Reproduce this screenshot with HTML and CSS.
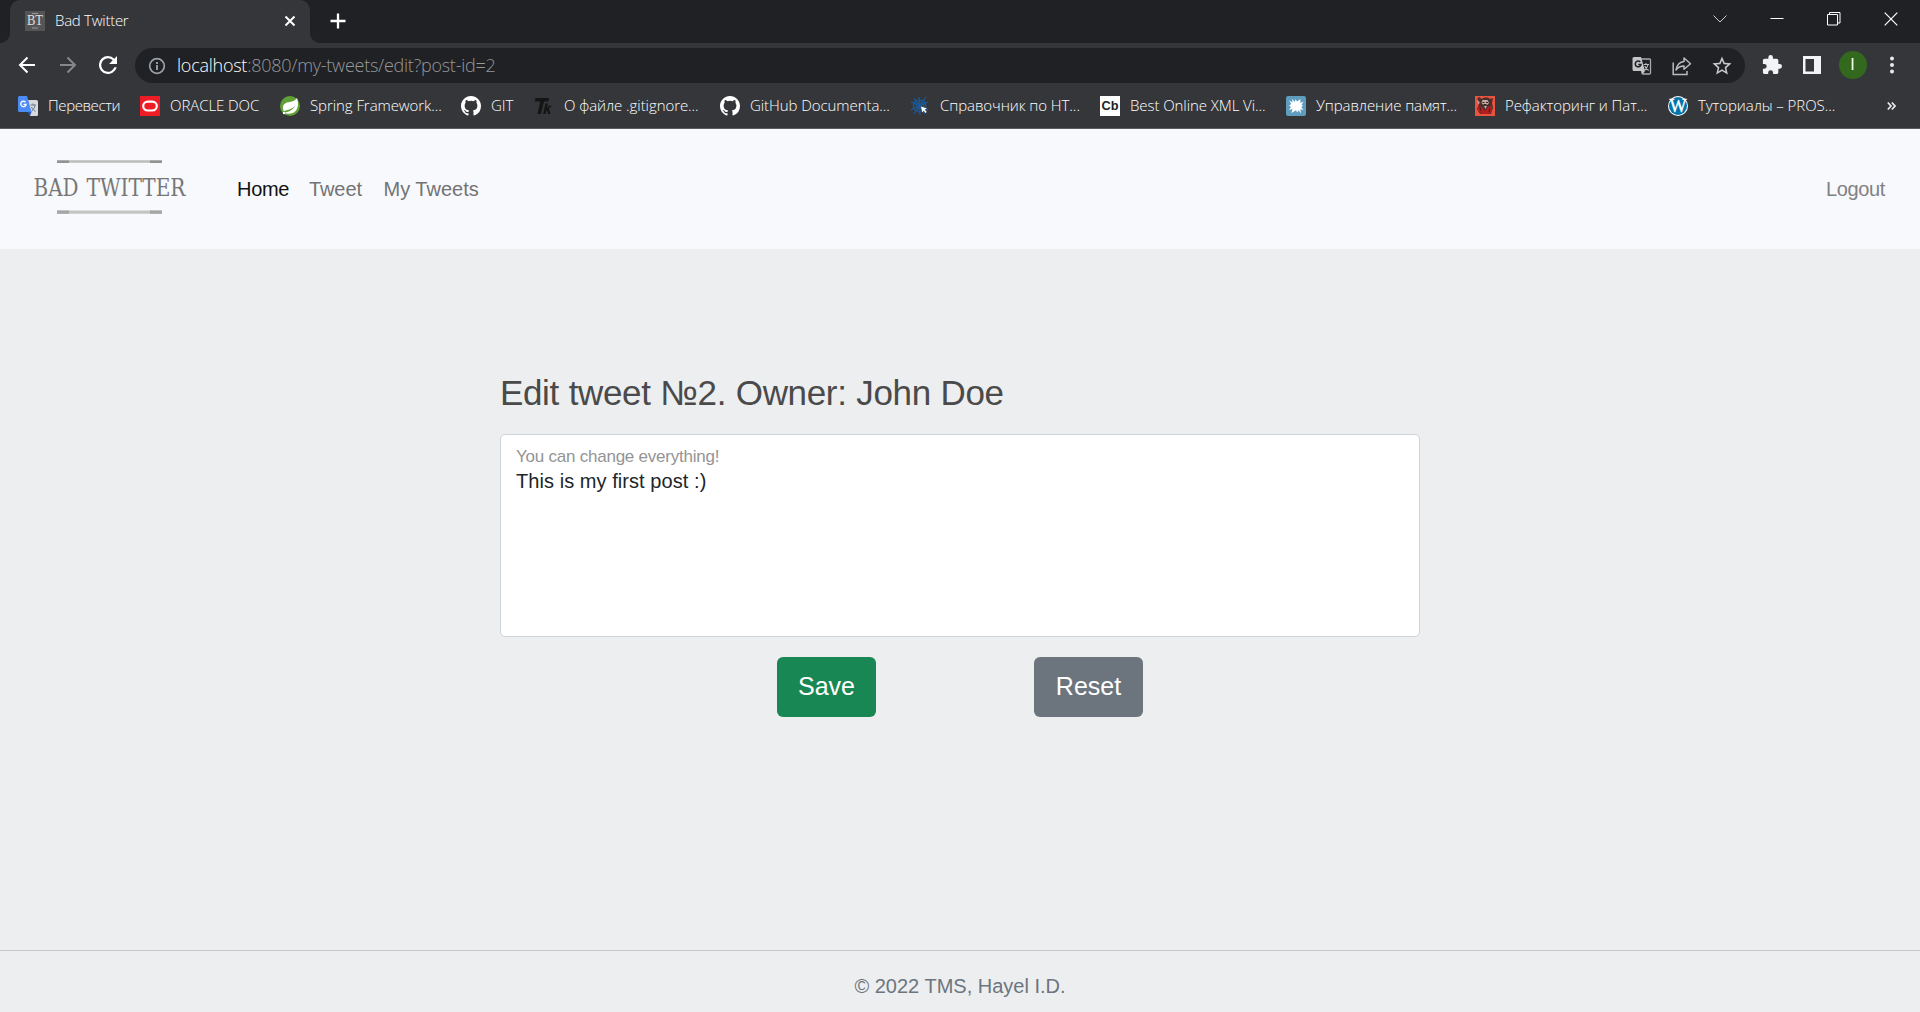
FILE: index.html
```html
<!DOCTYPE html>
<html lang="en">
<head>
<meta charset="utf-8">
<title>Bad Twitter</title>
<link rel="stylesheet" href="styles.css">
</head>
<body>
<div class="browser">
  <div class="tabstrip">
    <div class="tab">
      <svg class="favicon" width="20" height="20" viewBox="0 0 20 20"><rect width="20" height="20" fill="#555"/><path d="M7 2.500h6M7 17h6" stroke="#999"/><text x="2" y="14.300" textLength="16" lengthAdjust="spacingAndGlyphs" class="bt">BT</text></svg>
      <span class="tab-title">Bad Twitter</span>
      <svg class="tab-close" width="12" height="12" viewBox="0 0 12 12"><path d="M1.500 1.500l9 9m0-9l-9 9" stroke="#fff" stroke-width="2"/></svg>
    </div>
    <svg class="new-tab" width="16" height="16" viewBox="0 0 16 16"><path d="M8 .5v15M.5 8h15" stroke="#fff" stroke-width="2.300"/></svg>
    <div class="window-controls">
      <svg width="14" height="14" viewBox="0 0 14 14"><path d="M.5 3.500L7 10l6.500-6.500" fill="none" stroke="#ccc"/></svg>
      <svg width="14" height="14" viewBox="0 0 14 14"><path d="M.5 6.500h13" stroke="#fff"/></svg>
      <svg width="14" height="14" viewBox="0 0 14 14"><path d="M.5 2.500h10v10.500H.5zM2.500 2.500v-2h10.500v10.500h-2.500" fill="none" stroke="#fff"/></svg>
      <svg width="14" height="14" viewBox="0 0 14 14"><path d="M.7.7l12.600 12.600m0-12.600L.7 13.300" stroke="#fff" stroke-width="1.200"/></svg>
    </div>
  </div>
  <div class="toolbar">
    <svg class="back" width="18" height="18" viewBox="0 0 18 18"><path d="M17 9H2m7.500-7.500L2 9l7.500 7.500" fill="none" stroke="#fff" stroke-width="2"/></svg>
    <svg class="forward" width="18" height="18" viewBox="0 0 18 18"><path d="M1 9h15M8.500 1.500L16 9l-7.500 7.500" fill="none" stroke="#86878a" stroke-width="2"/></svg>
    <svg class="reload" width="18" height="18" viewBox="4 4 16 16"><path fill="#fff" d="M17.650 6.350A7.960 7.960 0 0 0 12 4a8 8 0 1 0 7.730 10h-2.080A6 6 0 1 1 12 6c1.660 0 3.140.69 4.220 1.780L13 11h7V4z"/></svg>
    <div class="omnibox">
      <svg class="info" width="18" height="18" viewBox="0 0 18 18"><circle cx="9" cy="9" r="7.300" fill="none" stroke="#9aa0a6" stroke-width="1.700"/><path d="M9 8v5M9 5v1.900" stroke="#9aa0a6" stroke-width="1.900"/></svg>
      <span class="url"><span class="host">localhost</span>:8080/my-tweets/edit?post-id=2</span>
      <div class="omni-actions">
        <svg width="20" height="20" viewBox="0 0 20 20"><path d="M8 3h9.500a1 1 0 0 1 1 1v13a1 1 0 0 1-1 1H11" fill="none" stroke="#aaa" stroke-width="1.300"/><path d="M2 1h7l4 14H2a1.500 1.500 0 0 1-1.500-1.500v-11A1.500 1.500 0 0 1 2 1z" fill="#c4c5c7"/><path d="M9 15h4l-3 4z" fill="#c4c5c7"/><path d="M8.300 6A2.900 2.900 0 1 0 9 8.500H6.300" fill="none" stroke="#202124" stroke-width="1.500"/><path d="M11.500 8.500H17M14 7v1.500M16 8.500c-.5 3-2 4.500-3.500 6M12.700 10c.8 2 2 3.400 4 4.500" fill="none" stroke="#bbb" stroke-width="1.100"/></svg>
        <svg width="20" height="20" viewBox="0 0 20 20"><path d="M1.200 6.500v12H15v-3.500" fill="none" stroke="#bbb" stroke-width="1.500"/><path d="M12 2l6.500 5.700-6.500 5.500V10c-3.500 0-6 1.300-8 4 .8-4.500 3.500-8 8-8.500z" fill="none" stroke="#bbb" stroke-width="1.500" stroke-linejoin="round"/></svg>
        <svg width="20" height="20" viewBox="1.500 1.500 21 21"><path fill="#c8c9cb" d="M22 9.240l-7.190-.62L12 2 9.190 8.630 2 9.240l5.460 4.730L5.820 21 12 17.270 18.180 21l-1.630-7.030zM12 15.400l-3.760 2.270 1-4.280-3.320-2.880 4.380-.38L12 6.100l1.710 4.040 4.380.38-3.320 2.880 1 4.280z"/></svg>
      </div>
    </div>
    <svg class="puzzle" width="20" height="20" viewBox="1 1 22 22"><path fill="#f1f3f4" d="M20.500 11H19V7c0-1.100-.9-2-2-2h-4V3.500a2.500 2.500 0 0 0-5 0V5H4c-1.100 0-2 .9-2 2v3.800h1.500a2.700 2.700 0 0 1 0 5.400H2V20c0 1.100.9 2 2 2h3.800v-1.500a2.700 2.700 0 0 1 5.400 0V22H17c1.100 0 2-.9 2-2v-4h1.500a2.500 2.500 0 0 0 0-5z"/></svg>
    <svg class="panel" width="18" height="18" viewBox="0 0 18 18"><path fill="#f1f3f4" fill-rule="evenodd" d="M0 0h18v18H0zM2.500 3v12.500H11V3z"/></svg>
    <span class="avatar">I</span>
    <svg class="menu" width="6" height="18" viewBox="0 0 6 18"><g fill="#e8eaed"><circle cx="3" cy="2.500" r="2"/><circle cx="3" cy="9" r="2"/><circle cx="3" cy="15.500" r="2"/></g></svg>
  </div>
  <div class="bookmarks">
    <div class="bookmark"><svg width="20" height="20" viewBox="0 0 20 20"><path d="M10 4h8.500A1.500 1.500 0 0 1 20 5.500v13a1.500 1.500 0 0 1-1.500 1.500H12z" fill="#d7dadd"/><path d="M1.500 0H9l4.500 16h-12A1.500 1.500 0 0 1 0 14.500v-13A1.500 1.500 0 0 1 1.500 0z" fill="#4b8bf5"/><path d="M9.500 16h4L12 20z" fill="#2b58b5"/><path d="M7.500 6.200a2.700 2.700 0 1 0 .6 2.200H5.500" fill="none" stroke="#fff" stroke-width="1.300"/><path d="M12.500 9H18M15 7.500V9M17 9c-.5 3-2 5-3.500 6.500M13.500 11c.7 1.600 2 3.300 4 4.500" fill="none" stroke="#607d8b"/></svg><span class="tight">Перевести</span></div>
    <div class="bookmark"><svg width="20" height="20" viewBox="0 0 20 20"><rect width="20" height="20" fill="#ee1c24"/><rect x="3.200" y="5.700" width="13.600" height="8.800" rx="4.400" fill="none" stroke="#fff" stroke-width="2.200"/></svg><span>ORACLE DOC</span></div>
    <div class="bookmark"><svg width="20" height="20" viewBox="0 0 20 20"><circle cx="10" cy="10" r="10" fill="#5fa134"/><path d="M17 2c2 6 1.500 14-6 15.500-2.500.4-5 0-7-.5 4-1 9-3 11-7-3 3-7 4-11.300 5C1.500 10 4 7 8.500 6.300 12 5.800 15 5 17 2z" fill="#fff"/><circle cx="4" cy="17" r="1.200" fill="#fff"/></svg><span>Spring Framework...</span></div>
    <div class="bookmark"><svg width="20" height="20" viewBox="0 0 16 16"><path fill="#fff" d="M8 0C3.580 0 0 3.580 0 8c0 3.540 2.290 6.530 5.470 7.590.4.070.55-.17.55-.38 0-.19-.01-.82-.01-1.490-2.010.37-2.530-.49-2.690-.94-.09-.23-.48-.94-.82-1.130-.28-.15-.68-.52-.01-.53.63-.01 1.080.58 1.230.82.72 1.210 1.870.87 2.330.66.070-.52.28-.87.51-1.070-1.780-.2-3.640-.89-3.640-3.950 0-.87.31-1.590.82-2.150-.08-.2-.36-1.020.080-2.120 0 0 .67-.21 2.200.82a7.600 7.600 0 0 1 4 0c1.530-1.040 2.200-.82 2.200-.82.44 1.100.16 1.920.080 2.120.51.56.82 1.270.82 2.150 0 3.070-1.870 3.750-3.650 3.950.29.25.54.73.54 1.480 0 1.070-.01 1.930-.01 2.200 0 .21.15.46.55.38A8.010 8.010 0 0 0 16 8c0-4.420-3.580-8-8-8z"/></svg><span>GIT</span></div>
    <div class="bookmark"><svg width="20" height="20" viewBox="0 0 20 20"><path fill="#151515" d="M1.500 2H15l-.8 3.500H10L7 18H3.500L6.300 5.500H.7z"/><path fill="#151515" d="M11.500 7.500h2.600l-1.100 4.700 2.400-2.700h2.500l-3 3.300 1.600 5.200h-2.500l-1-3.600-.8.900-.6 2.700H9z"/></svg><span>О файле .gitignore...</span></div>
    <div class="bookmark"><svg width="20" height="20" viewBox="0 0 16 16"><path fill="#fff" d="M8 0C3.580 0 0 3.580 0 8c0 3.540 2.290 6.530 5.470 7.590.4.070.55-.17.55-.38 0-.19-.01-.82-.01-1.490-2.010.37-2.530-.49-2.690-.94-.09-.23-.48-.94-.82-1.130-.28-.15-.68-.52-.01-.53.63-.01 1.080.58 1.230.82.72 1.210 1.870.87 2.330.66.070-.52.28-.87.51-1.070-1.780-.2-3.640-.89-3.640-3.950 0-.87.31-1.590.82-2.150-.08-.2-.36-1.020.080-2.120 0 0 .67-.21 2.200.82a7.600 7.600 0 0 1 4 0c1.530-1.040 2.200-.82 2.200-.82.44 1.100.16 1.920.080 2.120.51.56.82 1.270.82 2.150 0 3.070-1.870 3.750-3.650 3.950.29.25.54.73.54 1.480 0 1.070-.01 1.930-.01 2.200 0 .21.15.46.55.38A8.010 8.010 0 0 0 16 8c0-4.420-3.580-8-8-8z"/></svg><span>GitHub Documenta...</span></div>
    <div class="bookmark"><svg width="20" height="20" viewBox="0 0 20 20"><g fill="none" stroke="#1b5c9b" stroke-width="1.100"><path d="M9 1l1 18M1 6l17 8M1 14l17-8M4 2l11 16M16 1L4 18"/><path d="M5 5l4-1 5 1 2 5-2 5-5 1-4-2-2-4zM7 7l5-.5 2 3.500-2 3-4 .5-2-3z"/></g><path d="M11 10.500l6 2-2.200 1 2 2.500-1.300 1-2-2.500-1.200 2z" fill="#fff"/></svg><span>Справочник по HT...</span></div>
    <div class="bookmark"><svg width="20" height="20" viewBox="0 0 20 20"><rect width="20" height="20" fill="#fff"/><text x="1.500" y="14" textLength="17" lengthAdjust="spacingAndGlyphs" class="cb">Cb</text></svg><span>Best Online XML Vi...</span></div>
    <div class="bookmark"><svg width="20" height="20" viewBox="0 0 20 20"><rect width="20" height="20" rx="2" fill="#5f9dbf"/><path fill="#fff" d="M9 6l.5-3 1.500 2.500L14.500 3l-.3 3.700 3.300-.9-2 3 1.500 1-1.800 1.200 2.300 3-3.200-.8.700 4.300-2.600-3.200-1.200 2.200-1.200-2.200L5.500 17l1-4-3.500 1 2-3-2-1.500L5.300 8 3 4.500l3.500 1.800L6 3z"/></svg><span>Управление памят...</span></div>
    <div class="bookmark"><svg width="20" height="20" viewBox="0 0 20 20"><rect width="20" height="20" fill="#e9533f"/><path d="M2 3l2-2 3 2 2-1.500h4L15 3l3-1-1 5 1 5-2 6H5l-3-5 2-5z" fill="#49302e"/><path d="M3 10l4 1 3 4 3-4 4-1v5l-3 3H7l-4-3z" fill="#b41e1e"/><path d="M7.500 4h5l1.500 3-2 2H8.500L6.500 7zM2 3l3 4-2 1zM9 10h3l-1.500 3z" fill="#c4aaa0"/><path d="M7.500 6.500h2m1.500 0h2M8.500 8.500h3M5 11l1 4m9-3l-1 4" stroke="#332321"/></svg><span>Рефакторинг и Пат...</span></div>
    <div class="bookmark"><svg width="20" height="20" viewBox="0 0 20 20"><circle cx="10" cy="10" r="10" fill="#fff"/><circle cx="10" cy="10" r="9" fill="#0073aa"/><text x="1.500" y="16" textLength="17" lengthAdjust="spacingAndGlyphs" class="wp">W</text></svg><span>Туториалы – PROS...</span></div>
    <svg class="more" width="9" height="10" viewBox="0 0 9 10"><path d="M.8 1.500L4 5 .8 8.500M4.800 1.500L8 5 4.800 8.500" fill="none" stroke="#e8eaed" stroke-width="1.700"/></svg>
  </div>
</div>
<header class="navbar">
  <svg class="logo" width="160" height="80" viewBox="0 0 160 80"><path d="M25 12.500h105" stroke="#bbb" stroke-width="2.600"/><path d="M25 12.800h12M118 12.800h12" stroke="#929292" stroke-width="2.400"/><path d="M25 63.200h105" stroke="#c4c4c4" stroke-width="3.200"/><path d="M25 63.200h12M118 63.200h12" stroke="#a5a7a7" stroke-width="3.200"/><text x="1.500" y="46.500" textLength="45" lengthAdjust="spacingAndGlyphs" class="logo-text">BAD</text><text x="54.500" y="46.500" textLength="99" lengthAdjust="spacingAndGlyphs" class="logo-text">TWITTER</text></svg>
  <nav class="links"><a class="home">Home</a><a class="tweet">Tweet</a><a class="mine">My Tweets</a></nav>
  <a class="logout">Logout</a>
</header>
<main class="content">
  <form class="editor">
    <h1 class="title">Edit tweet №2. Owner: John Doe</h1>
    <div class="field"><label class="hint">You can change everything!</label><div class="tweet-text">This is my first post :)</div></div>
    <div class="buttons"><button type="button" class="btn save">Save</button><button type="button" class="btn reset">Reset</button></div>
  </form>
</main>
<footer class="footer"><span>© 2022 TMS, Hayel I.D.</span></footer>
</body>
</html>
```
FILE: styles.css
```css
* { box-sizing: border-box; }
body { margin: 0; width: 1920px; height: 1012px; overflow: hidden; display: flex; flex-direction: column; background: #edeef0; font: 20px/30px "Liberation Sans", Arial, sans-serif; }
svg { display: block; flex: none; }
span, a, label { white-space: nowrap; }
.browser { height: 129px; background: #35363a; border-bottom: 1px solid #5b5c60; font-family: "Open Sans", "Noto Sans", sans-serif; font-weight: 300; color: #fff; }
.tabstrip { height: 43px; background: #202124; display: flex; }
.tab { position: relative; width: 300px; margin-left: 10px; background: #35363a; border-radius: 10px 10px 0 0; display: flex; align-items: center; padding: 0 14px 2px 15px; }
.tab::before, .tab::after { content: ""; position: absolute; bottom: 0; width: 10px; height: 10px; }
.tab::before { right: 100%; background: radial-gradient(circle at 0 0, #202124 9.5px, #35363a 10.5px); }
.tab::after { left: 100%; background: radial-gradient(circle at 100% 0, #202124 9.5px, #35363a 10.5px); }
.tab-title { margin: -1px 0 0 10px; font-size: 15px; letter-spacing: -0.27px; flex: 1; }
.bt { font: 15px "Liberation Serif", serif; fill: #e0e0e0; }
.new-tab { margin: 13px 0 0 20px; }
.window-controls { margin: 12px 22px 0 auto; display: flex; gap: 43px; }
.toolbar { height: 44px; display: flex; align-items: center; padding-left: 18px; }
.forward { margin-left: 23px; }
.reload { margin-left: 22px; }
.omnibox { width: 1610px; height: 35px; margin: 1px 0 0 18px; border-radius: 18px; background: #202124; display: flex; align-items: center; padding: 0 13px 0 13px; }
.url { margin-left: 11px; font-size: 18px; line-height: 35px; color: #96989b; letter-spacing: -0.25px; }
.host { color: #fff; }
.omni-actions { margin-left: auto; display: flex; gap: 20px; }
.puzzle { margin-left: 17px; }
.panel { margin-left: 21px; }
.avatar { width: 28px; height: 28px; margin-left: 17.5px; border-radius: 50%; background: #33691e; font: 16px/28px "Liberation Sans", sans-serif; text-align: center; }
.menu { margin-left: 22px; }
.bookmarks { height: 37px; padding-left: 18px; display: grid; grid-template-columns: 122px 140px 181px 73px 186px 190px 190px 186px 189px 193px 219px auto; align-items: center; font-size: 15px; }
.bookmark { display: flex; align-items: center; }
.bookmark span { margin: -1px 0 0 10px; line-height: 24px; letter-spacing: -0.07px; }
.bookmark .tight { letter-spacing: -0.4px; }
.cb { font: bold 12px "Liberation Sans", sans-serif; fill: #222; }
.wp { font: 18px "Liberation Serif", serif; fill: #fff; stroke: #fff; stroke-width: 0.4px; }
.navbar { height: 120px; background: #f8f9fc; display: flex; align-items: center; padding: 0 35px 0 32px; }
.logo { margin-top: -18px; margin-bottom: -18px; overflow: visible; }
.logo-text { font: 24px "DejaVu Serif Condensed", "DejaVu Serif", serif; fill: #777; }
.links { display: flex; margin-left: 45px; color: #727375; }
.home { width: 72px; color: #111214; letter-spacing: -0.3px; }
.tweet { width: 74.5px; letter-spacing: -0.1px; }
.logout { margin-left: auto; color: #808184; letter-spacing: -0.35px; }
.content { flex: 1; }
.editor { width: 920px; margin: 0 auto; padding-top: 119px; }
.title { margin: 0; height: 66px; font-size: 35px; line-height: 50px; font-weight: 400; letter-spacing: -0.35px; word-spacing: 0.4px; color: #4a4a4a; white-space: nowrap; }
.field { height: 203px; background: #fff; border: 1px solid #ced4da; border-radius: 5px; padding: 11px 15px; }
.hint { display: block; height: 20px; font-size: 17px; line-height: 21px; letter-spacing: -0.23px; color: #949494; }
.tweet-text { color: #212529; line-height: 30px; letter-spacing: 0.06px; }
.buttons { display: flex; justify-content: center; gap: 158px; margin-top: 20px; }
.btn { height: 60px; border: 0; padding: 0 0 2px; border-radius: 6px; color: #fff; font: 25px/57px "Liberation Sans", sans-serif; }
.save { width: 99px; background: #198754; }
.reset { width: 109px; background: #6c757d; }
.footer { height: 62px; border-top: 1px solid #c5c7c9; text-align: center; color: #6c757d; padding-top: 20px; }
```
